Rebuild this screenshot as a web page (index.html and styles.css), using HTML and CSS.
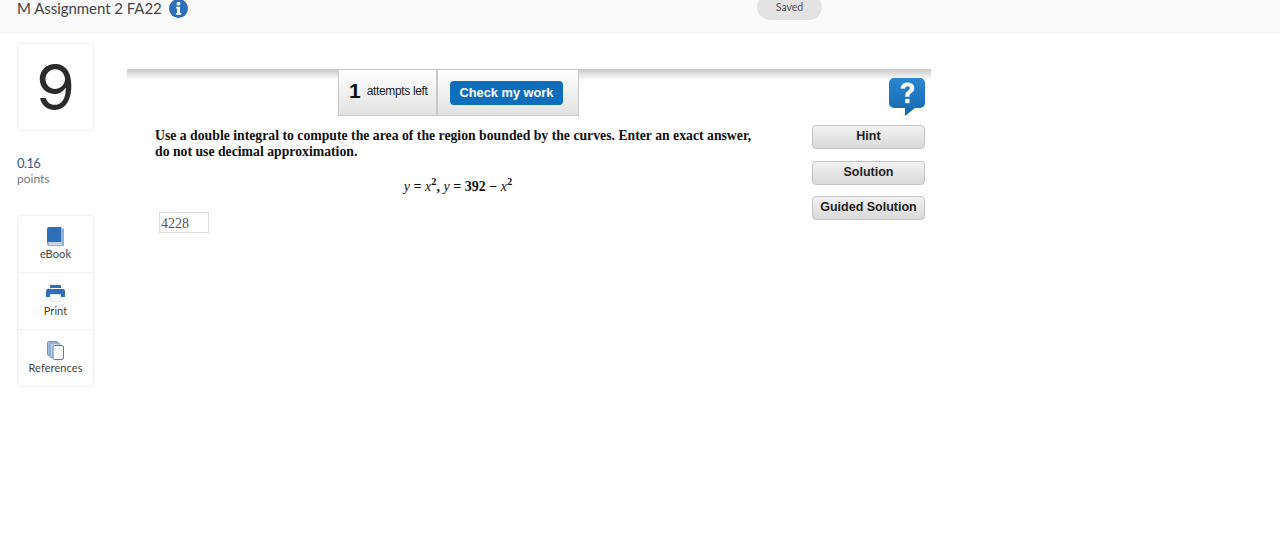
FILE: index.html
```html
<!DOCTYPE html>
<html lang="en">
<head>
<meta charset="utf-8">
<title>M Assignment 2 FA22</title>
<link rel="stylesheet" href="styles.css">
</head>
<body>
<header class="header">
  <div class="title">
    <span>M Assignment 2 FA22</span>
    <svg class="info" viewBox="0 0 20 20" width="19" height="19" aria-hidden="true">
      <circle cx="10" cy="10" r="10" fill="#2f6fb8"/>
      <circle cx="10" cy="4.900" r="2" fill="#fff"/>
      <path d="M7.400 8.200h4.200v6.600h1.200v1.900H7.300v-1.900h1.200v-4.700H7.400z" fill="#fff"/>
    </svg>
  </div>
  <div class="saved">Saved</div>
</header>
<div class="page">
  <aside class="side">
    <div class="number">9</div>
    <div class="points"><div class="points-value">0.16</div><div class="points-label">points</div></div>
    <nav class="tools">
      <div class="tool">
        <svg viewBox="0 0 17 19" width="17" height="19" aria-hidden="true">
          <path d="M0 2a2 2 0 0 1 2-2h12.500v15H2a2 2 0 0 0-2 1.500z" fill="#2f6fb8"/>
          <path d="M15 1.500h2V19H2a2 2 0 0 1-2-2.200A2 2 0 0 1 2 15.500h13z" fill="#8fb0d8"/>
          <rect x="2" y="16.600" width="12.500" height="1" fill="#fff"/>
        </svg>
        <span>eBook</span>
      </div>
      <div class="tool">
        <svg viewBox="0 0 19 17" width="19" height="17" aria-hidden="true">
          <rect x="4" y="0" width="11" height="3" fill="#2f6fb8"/>
          <path d="M2 4h15a2 2 0 0 1 2 2v6h-4V9H4v3H0V6a2 2 0 0 1 2-2z" fill="#2f6fb8"/>
          <rect x="5" y="9.500" width="9" height="7.500" fill="#fff" stroke="#9fb8d8" stroke-width="0.500"/>
        </svg>
        <span>Print</span>
      </div>
      <div class="tool">
        <svg viewBox="0 0 17 19" width="17" height="19" aria-hidden="true">
          <rect x="0.500" y="0.500" width="10" height="14" rx="1.500" fill="#a9bfdc" stroke="#6f93c4"/>
          <rect x="3" y="2" width="10" height="14.500" rx="1.500" fill="#c3d3e8" stroke="#6f93c4"/>
          <rect x="6" y="4.500" width="10.500" height="14" rx="1.500" fill="#fff" stroke="#4f7fbb"/>
        </svg>
        <span>References</span>
      </div>
    </nav>
  </aside>
  <main class="main">
    <div class="toolbar">
      <div class="attempts">
        <div class="attempts-left"><strong>1</strong><span>attempts left</span></div>
        <div class="attempts-check"><button class="check" type="button">Check my work</button></div>
      </div>
      <svg class="help" viewBox="0 0 36 38" width="36" height="38" aria-hidden="true">
        <defs>
          <linearGradient id="helpFill" x1="0" y1="0" x2="0" y2="1">
            <stop offset="0" stop-color="#2a86d0"/>
            <stop offset="1" stop-color="#1468ad"/>
          </linearGradient>
        </defs>
        <path d="M5 0h26a5 5 0 0 1 5 5v20a5 5 0 0 1-5 5H26l-10 8v-8H5a5 5 0 0 1-5-5V5a5 5 0 0 1 5-5z" fill="url(#helpFill)"/>
        <path d="M11.500 10.500C12 6.500 15 4.500 18.500 4.500c4 0 6.800 2.300 6.800 5.600 0 2.500-1.300 3.800-3 5-1.300.900-1.800 1.500-1.800 3v.600h-4.200v-1c0-2.400.800-3.600 2.600-4.900 1.300-.900 2-1.500 2-2.600 0-1.200-1-2-2.400-2-1.500 0-2.400.900-2.700 2.500z" fill="#fff"/>
        <rect x="16.300" y="21" width="4.200" height="4.200" fill="#fff"/>
      </svg>
    </div>
    <div class="content">
      <section class="question">
        <p class="prompt">Use a double integral to compute the area of the region bounded by the curves. Enter an exact answer, do not use decimal approximation.</p>
        <p class="formula"><i>y</i> = <i>x</i><sup>2</sup>, <i>y</i> = 392 &minus; <i>x</i><sup>2</sup></p>
        <input class="answer" type="text" value="4228" aria-label="Answer">
      </section>
      <div class="helpers">
        <button class="helper" type="button">Hint</button>
        <button class="helper" type="button">Solution</button>
        <button class="helper" type="button">Guided Solution</button>
      </div>
    </div>
  </main>
</div>
</body>
</html>
```
FILE: styles.css
```css
* { box-sizing: border-box; }
html, body { margin: 0; padding: 0; background: #fff; }
body { height: 535px; overflow: hidden; font-family: "Lato", "Open Sans", sans-serif; color: #333; }

.header {
  height: 33px;
  background: #fafafa;
  border-bottom: 1px solid #f2f2f2;
  display: flex;
  position: relative;
  padding-left: 17px;
  overflow: hidden;
}
.title { display: flex; align-items: flex-start; gap: 7px; font-size: 15px; line-height: 17px; letter-spacing: -0.05px; color: #444; }
.title .info { margin-top: -1px; }
.saved {
  position: absolute;
  left: 757px;
  top: -6px;
  width: 65px;
  height: 26px;
  border-radius: 13px;
  background: #e3e3e3;
  color: #555;
  font-size: 10.500px;
  line-height: 26px;
  text-align: center;
}

.page { display: flex; padding-left: 17px; }
.side { width: 77px; flex: none; padding-top: 10px; }
.number {
  height: 88px;
  border: 1px solid #f0f0f0;
  border-radius: 4px;
  font-family: "Inter", "Lato", sans-serif;
  font-weight: 400;
  font-size: 63px;
  line-height: 86px;
  text-align: center;
  color: #2b2b2b;
}
.points { margin-top: 25px; line-height: 15px; }
.points-value { font-size: 13px; letter-spacing: -0.6px; color: #3b5b80; }
.points-label { font-size: 12px; color: #777; }
.tools { margin-top: 29px; border: 1px solid #f0f0f0; border-radius: 4px; }
.tool {
  height: 57px;
  display: flex;
  flex-direction: column;
  align-items: center;
  justify-content: flex-start;
  gap: 0;
  font-size: 11px;
  line-height: 14px;
  letter-spacing: 0.1px;
  color: #444;
  border-bottom: 1px solid #f0f0f0;
}
.tool svg { display: block; margin: 11px 0 1px; }
.tool:nth-child(2) svg { margin: 12px 0 2px; }
.tool:last-child { height: 56px; border-bottom: 0; }

.main { width: 804px; margin-left: 33px; padding-top: 36px; }
.toolbar {
  height: 47px;
  display: flex;
  align-items: flex-start;
  justify-content: space-between;
  padding: 0 6px 0 211px;
  background: linear-gradient(#c8c8c8, #fff) no-repeat 0 0 / 100% 11px;
}
.attempts {
  display: flex;
  height: 47px;
  width: 241px;
  background: linear-gradient(#fff, #e2e2e2);
  border: 1px solid #c8c8c8;
  font-family: "Liberation Sans", Arial, sans-serif;
}
.attempts-left {
  width: 99px;
  border-right: 2px solid #c8c8c8;
  display: flex;
  align-items: center;
  gap: 6px;
  padding: 0 0 3px 10px;
  color: #222;
  font-size: 12px;
  letter-spacing: -0.35px;
}
.attempts-left strong { font-size: 21px; line-height: 24px; letter-spacing: 0; color: #111; }
.attempts-check { flex: 1; padding: 11px 0 0 12px; }
.check {
  display: block;
  width: 113px;
  height: 24px;
  padding: 0 0 1px;
  border: 0;
  border-radius: 4px;
  background: #0f6ebb;
  color: #fff;
  font: bold 12.800px/22px "Liberation Sans", Arial, sans-serif;
}
.help { margin-top: 9px; }

.content { display: flex; justify-content: space-between; padding: 9px 6px 0 28px; }
.question { width: 600px; padding-top: 3px; font-family: "Liberation Serif", "Times New Roman", serif; color: #111; }
.prompt { margin: 0; font-size: 13.740px; line-height: 16px; font-weight: bold; }
.formula {
  margin: 17px 0 0;
  width: 606px;
  text-align: center;
  font-size: 14px;
  line-height: 20px;
  font-weight: bold;
}
.formula i { font-weight: normal; }
.formula sup { font-size: 10.500px; line-height: 0; }
.answer {
  display: block;
  margin: 15px 0 0 4px;
  width: 50px;
  height: 21px;
  padding: 2px 1px 0;
  border: 1px solid #ddd;
  font: 14px/16px "Liberation Serif", "Times New Roman", serif;
  color: #555;
  background: #fff;
}
.helpers { width: 113px; display: flex; flex-direction: column; gap: 11.500px; }
.helper {
  height: 24px;
  padding: 0 0 1px;
  border: 1px solid #c4c4c4;
  border-radius: 4px;
  background: linear-gradient(#f2f2f2, #d9d9d9);
  color: #222;
  font: bold 12.500px/21px "Liberation Sans", Arial, sans-serif;
  letter-spacing: 0;
}
```
